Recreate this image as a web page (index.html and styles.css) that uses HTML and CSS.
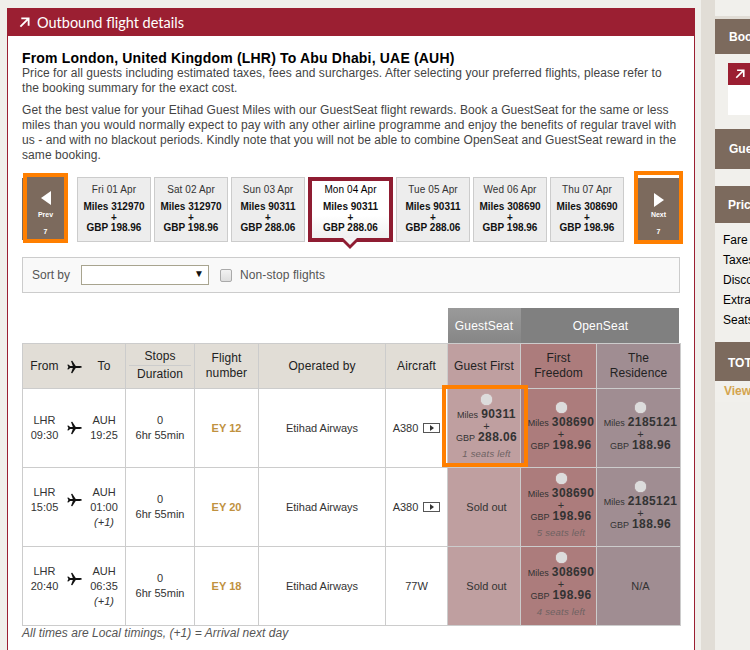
FILE: index.html
```html
<!DOCTYPE html>
<html lang="en">
<head>
<meta charset="utf-8">
<title>Outbound flight details</title>
<link rel="stylesheet" href="styles.css">
</head>
<body>
<svg class="defs" width="0" height="0" aria-hidden="true">
  <symbol id="plane" viewBox="0 0 16 14"><path d="M0.3 4.6 L1.4 4.3 L3.4 6 L6.2 6 L4.3 0.6 L5.6 0.3 L9.3 6 L13.6 6 C15 6 15.8 6.5 15.8 7 C15.8 7.5 15 8 13.6 8 L9.3 8 L5.6 13.7 L4.3 13.4 L6.2 8 L3.4 8 L1.4 9.7 L0.3 9.4 L1.5 7 Z"/></symbol>
  <symbol id="arrow" viewBox="0 0 12 12"><path d="M2.5 1.5 H10.5 V9.5 M10 2 L1.5 10.5" fill="none" stroke="currentColor" stroke-width="2"/></symbol>
</svg>
<div class="page">
  <main class="panel">
    <h1 class="panel-title"><svg class="title-arrow"><use href="#arrow"/></svg>Outbound flight details</h1>
    <div class="panel-body">
      <h2 class="route">From London, United Kingdom (LHR) To Abu Dhabi, UAE (AUH)</h2>
      <p class="intro">Price for all guests including estimated taxes, fees and surcharges. After selecting your preferred flights, please refer to the booking summary for the exact cost.</p>
      <p class="intro second">Get the best value for your Etihad Guest Miles with our GuestSeat flight rewards. Book a GuestSeat for the same or less miles than you would normally expect to pay with any other airline programme and enjoy the benefits of regular travel with us - and with no blackout periods. Kindly note that you will not be able to combine OpenSeat and GuestSeat reward in the same booking.</p>

      <div class="dates">
        <a class="nav prev"><span class="tri tri-left"></span><b>Prev</b><b>7</b></a>
        <div class="date"><span>Fri 01 Apr</span><strong>Miles 312970<br>+<br>GBP 198.96</strong></div>
        <div class="date"><span>Sat 02 Apr</span><strong>Miles 312970<br>+<br>GBP 198.96</strong></div>
        <div class="date"><span>Sun 03 Apr</span><strong>Miles 90311<br>+<br>GBP 288.06</strong></div>
        <div class="date selected"><span>Mon 04 Apr</span><strong>Miles 90311<br>+<br>GBP 288.06</strong></div>
        <div class="date"><span>Tue 05 Apr</span><strong>Miles 90311<br>+<br>GBP 288.06</strong></div>
        <div class="date"><span>Wed 06 Apr</span><strong>Miles 308690<br>+<br>GBP 198.96</strong></div>
        <div class="date"><span>Thu 07 Apr</span><strong>Miles 308690<br>+<br>GBP 198.96</strong></div>
        <a class="nav next"><span class="tri tri-right"></span><b>Next</b><b>7</b></a>
      </div>

      <div class="sort">
        <span>Sort by</span>
        <div class="select"><span class="caret">▼</span></div>
        <span class="check"></span>
        <span class="nonstop">Non-stop flights</span>
      </div>

      <table class="flights">
        <colgroup>
          <col class="c1"><col class="c2"><col class="c3"><col class="c4"><col class="c5"><col class="c6"><col class="c7"><col class="c8">
        </colgroup>
        <thead>
          <tr class="groups">
            <th class="blank" colspan="5"></th>
            <th class="g-guest">GuestSeat</th>
            <th class="g-open" colspan="2">OpenSeat</th>
          </tr>
          <tr class="heads">
            <th><div class="route-cell head-route"><span>From</span><svg class="plane"><use href="#plane"/></svg><span>To</span></div></th>
            <th class="stops"><div class="stops-top">Stops</div><div>Duration</div></th>
            <th>Flight<br>number</th>
            <th>Operated by</th>
            <th>Aircraft</th>
            <th class="guest">Guest First</th>
            <th class="first">First<br>Freedom</th>
            <th class="res">The<br>Residence</th>
          </tr>
        </thead>
        <tbody>
          <tr>
            <td><div class="route-cell"><span>LHR<br>09:30</span><svg class="plane"><use href="#plane"/></svg><span>AUH<br>19:25</span></div></td>
            <td>0<br>6hr 55min</td>
            <td class="flightno">EY 12</td>
            <td>Etihad Airways</td>
            <td>A380<i class="play"></i></td>
            <td class="guest fare"><span class="radio"></span><div class="price"><small>Miles</small> <b>90311</b><br>+<br><small>GBP</small> <b>288.06</b></div><em>1 seats left</em><span class="highlight"></span></td>
            <td class="first fare"><span class="radio"></span><div class="price"><small>Miles</small> <b>308690</b><br>+<br><small>GBP</small> <b>198.96</b></div></td>
            <td class="res fare"><span class="radio"></span><div class="price"><small>Miles</small> <b>2185121</b><br>+<br><small>GBP</small> <b>188.96</b></div></td>
          </tr>
          <tr>
            <td><div class="route-cell"><span>LHR<br>15:05</span><svg class="plane"><use href="#plane"/></svg><span>AUH<br>01:00<br><i>(+1)</i></span></div></td>
            <td>0<br>6hr 55min</td>
            <td class="flightno">EY 20</td>
            <td>Etihad Airways</td>
            <td>A380<i class="play"></i></td>
            <td class="guest">Sold out</td>
            <td class="first fare"><span class="radio"></span><div class="price"><small>Miles</small> <b>308690</b><br>+<br><small>GBP</small> <b>198.96</b></div><em>5 seats left</em></td>
            <td class="res fare"><span class="radio"></span><div class="price"><small>Miles</small> <b>2185121</b><br>+<br><small>GBP</small> <b>188.96</b></div></td>
          </tr>
          <tr>
            <td><div class="route-cell"><span>LHR<br>20:40</span><svg class="plane"><use href="#plane"/></svg><span>AUH<br>06:35<br><i>(+1)</i></span></div></td>
            <td>0<br>6hr 55min</td>
            <td class="flightno">EY 18</td>
            <td>Etihad Airways</td>
            <td>77W</td>
            <td class="guest">Sold out</td>
            <td class="first fare"><span class="radio"></span><div class="price"><small>Miles</small> <b>308690</b><br>+<br><small>GBP</small> <b>198.96</b></div><em>4 seats left</em></td>
            <td class="res">N/A</td>
          </tr>
        </tbody>
      </table>
      <p class="note">All times are Local timings, (+1) = Arrival next day</p>
    </div>
  </main>
  <div class="strip"></div>
  <aside class="side">
    <h3 class="side-head h1">Booking summary</h3>
    <div class="side-box"><div class="side-box-head"><svg class="side-arrow"><use href="#arrow"/></svg></div></div>
    <h3 class="side-head h2">Guests</h3>
    <h3 class="side-head h3">Price details</h3>
    <ul class="side-list"><li>Fare</li><li>Taxes</li><li>Discount</li><li>Extras</li><li>Seats</li></ul>
    <h3 class="side-head h4">TOTAL</h3>
    <a class="side-link">View details</a>
  </aside>
</div>
</body>
</html>
```
FILE: styles.css
```css
html, body { margin: 0; padding: 0; height: 650px; overflow: hidden; }
body { background: #f0efeb; font-family: "Liberation Sans", Arial, sans-serif; font-size: 12px; color: #333; }
.defs { position: absolute; }
.page { display: flex; width: 1000px; height: 650px; align-items: stretch; }

.panel { flex: none; box-sizing: border-box; width: 688px; margin: 8px 6px 0 7px; background: #fff; border: solid #9b1f32; border-width: 0 1px; height: 660px; }
.panel-title { margin: 0 -1px; box-sizing: border-box; height: 28px; background: #9b1f32; color: #fff; font: 400 14.5px/27px Lato, sans-serif; padding: 1px 0 0 12px; display: flex; align-items: center; }
.title-arrow { width: 11px; height: 11px; margin-right: 7px; color: #fff; }
.panel-body { padding: 14px 14px 0; }
.route { margin: 0; font: 700 14px/16px "Liberation Sans", sans-serif; color: #000; letter-spacing: 0.18px; }
.intro { margin: 0; font-size: 12px; line-height: 15px; color: #444; letter-spacing: 0.07px; }
.intro.second { margin-top: 7px; }

.dates { display: flex; align-items: flex-start; margin-top: 14px; height: 66px; }
.nav { flex: none; box-sizing: border-box; height: 62px; background: #7c6a5d; color: #fff; display: flex; flex-direction: column; align-items: center; font-size: 7px; position: relative; outline: 4px solid #ff7f00; }
.nav b { display: block; line-height: 8px; }
.nav b:last-child { margin-top: 9px; }
.prev { margin-left: 5px; width: 37px; margin-right: 13px; }
.prev::before { content: ""; position: absolute; left: -5px; top: 1px; width: 1px; height: 62px; background: #7c6a5d; }
.next { width: 41px; margin-left: 11px; margin-top: -2px; height: 65px; border-top: 3px solid #fff; }
.tri { width: 0; height: 0; border-style: solid; margin: 14px 0 6px; }
.tri-left { border-width: 7px 10px 7px 0; border-color: transparent #fff transparent transparent; }
.tri-right { border-width: 7px 0 7px 10px; border-color: transparent transparent transparent #fff; margin: 15px 0 4px; }
.date { flex: none; box-sizing: border-box; width: 74px; height: 65px; margin-right: 3px; background: #ededed; border: 1px solid #ccc; text-align: center; color: #333; font-size: 10px; padding-top: 5px; }
.date span { display: block; line-height: 14px; letter-spacing: 0.1px; }
.date strong { display: block; margin-top: 5px; font-size: 10px; line-height: 10.5px; color: #111; }
.date.selected { width: 85px; border: 4px solid #8f1d32; background: linear-gradient(#fff, #fff 60%, #f0f0f0); padding-top: 2px; position: relative; }
.date.selected span { color: #000; }
.date.selected::after { content: ""; position: absolute; left: 28px; top: calc(100% + 1px); width: 0; height: 0; border-style: solid; border-width: 10px 10px 0; border-color: #8f1d32 transparent transparent; }
.date.selected::before { content: ""; position: absolute; z-index: 1; left: 31px; top: 100%; width: 0; height: 0; border-style: solid; border-width: 7px 7px 0; border-color: #f4f4f4 transparent transparent; }

.sort { box-sizing: border-box; height: 36px; margin-top: 14px; background: #f9f9f9; border: 1px solid #ccc; display: flex; align-items: center; padding-left: 9px; font-size: 12px; color: #555; }
.nonstop { letter-spacing: 0.1px; }
.select { box-sizing: border-box; width: 128px; height: 20px; margin-left: 11px; background: #fff; border: 1px solid #a8a48f; position: relative; }
.caret { position: absolute; right: 4px; top: 2px; font-size: 10px; color: #111; }
.check { box-sizing: border-box; width: 12px; height: 13px; margin: 0 8px 0 11px; border: 1px solid #aaa; border-radius: 2px; background: linear-gradient(#f2f2f2, #dedede); }

.flights { margin-top: 15px; width: 658px; border-collapse: collapse; table-layout: fixed; color: #333; font-size: 11px; position: relative; }
.c1 { width: 103px; } .c2 { width: 69px; } .c3 { width: 64px; } .c4 { width: 127px; } .c5 { width: 62px; } .c6 { width: 73px; } .c7 { width: 76px; } .c8 { width: 84px; }
.flights td, .heads th { border: 1px solid #ccc; text-align: center; padding: 0; vertical-align: middle; line-height: 15px; font-weight: 400; }
.groups th { height: 35px; padding: 0; color: #fff; font-weight: 400; font-size: 12px; letter-spacing: 0.2px; }
.blank { background: #fff; }
.g-guest { background: linear-gradient(#9a9a9a, #868686); }
.g-open { background: linear-gradient(#808080, #808080) no-repeat; background-size: calc(100% - 2px) 100%; }
.heads th { height: 44px; background: #e1ddd6; color: #222; font-size: 12px; letter-spacing: 0.1px; }
.flights .heads .stops { padding-bottom: 2px; height: 42px; }
.flights .heads .guest { background: #bf9fa0; }
.flights .heads .first { background: #ac7c7c; }
.flights .heads .res { background: #a08d92; }
.flights tbody tr { height: 79px; }
.flights td.guest { background: #bf9fa0; position: relative; padding-left: 5px; }
.flights td.first { background: #ac7c7c; padding-left: 5px; }
.flights td.res { background: #a08d92; padding-left: 4px; }
.flights td.fare { padding-bottom: 3px; }
.route-cell { display: flex; justify-content: space-between; align-items: flex-start; padding: 0 6px 0 6.5px; }
.route-cell > span { width: 30px; text-align: center; }
.route-cell i { font-style: italic; }
.head-route { align-items: center; }
.plane { flex: none; width: 15px; height: 14px; fill: #111; margin-top: 8px; }
.head-route .plane { margin-top: 2px; }
.stops-top { margin: 0 3px 1px; padding-bottom: 1px; border-bottom: 1px solid #ccc; }
.flights td.flightno { color: #c0913f; font-weight: 700; }
.play { display: inline-block; box-sizing: border-box; width: 17px; height: 10px; margin-left: 5px; border: 1px solid #555; position: relative; vertical-align: -1px; }
.play::after { content: ""; position: absolute; left: 6px; top: 1px; border-style: solid; border-width: 3px 0 3px 4px; border-color: transparent transparent transparent #333; }
.radio { display: block; width: 11px; height: 11px; margin: 0 auto 4px; border-radius: 50%; background: #dcdcdc; box-shadow: 0 0 1px #f4f4f4; }
.price { line-height: 11px; white-space: nowrap; color: #333; }
.price small { font-size: 9px; }
.price b { font-size: 12px; letter-spacing: 0.4px; }
.fare em { display: block; font-size: 9.5px; color: #6e6262; letter-spacing: 0.2px; margin-top: 4px; line-height: 11px; }
.highlight { position: absolute; left: -6px; top: -4px; width: 86px; height: 82px; box-sizing: border-box; border: 4px solid #ff7f00; pointer-events: none; }
.note { margin: 0; font-style: italic; font-size: 12px; color: #555; letter-spacing: 0.05px; line-height: 15px; }

.strip { flex: none; width: 14px; background: #e1ddd6; }
.side { flex: none; width: 285px; height: 402px; background: #f1f0ec; padding-top: 16px; box-sizing: border-box; }
.side-head { margin: 0; background: #7c6a5d; color: #fff; font: 700 12px "Liberation Sans", sans-serif; padding-left: 14px; display: flex; align-items: center; }
.side-head.h1 { height: 35px; border-top: 3px solid #e1ddd6; }
.side-head.h2 { height: 40px; margin-top: 14px; }
.side-head.h3 { height: 37px; margin-top: 17px; padding-left: 13px; }
.side-head.h4 { box-sizing: border-box; height: 39px; margin-top: 12px; padding: 3px 0 0 13px; }
.side-box { margin: 9px 0 0 13px; height: 52px; background: #fff; }
.side-box-head { height: 22px; background: #9b1f32; display: flex; align-items: center; padding-left: 7px; }
.side-arrow { width: 10px; height: 10px; color: #fff; }
.side-list { list-style: none; margin: 7px 0 0; padding: 0 0 0 8px; font-size: 12px; line-height: 20px; color: #000; }
.side-link { display: block; padding-left: 9px; font-weight: 700; font-size: 12px; color: #d4a44e; line-height: 21px; }
```
